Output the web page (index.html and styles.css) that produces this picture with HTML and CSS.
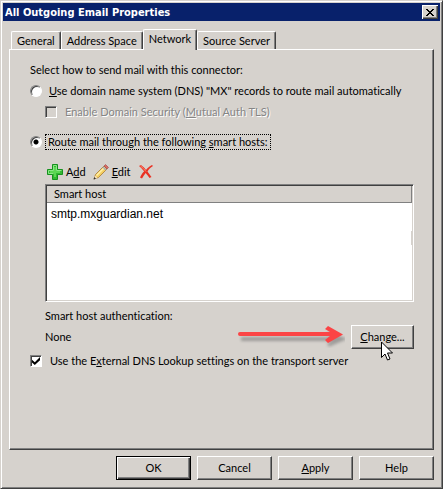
FILE: index.html
```html
<!DOCTYPE html>
<html lang="en">
<head>
<meta charset="utf-8">
<title>All Outgoing Email Properties</title>
<link rel="stylesheet" href="styles.css">
</head>
<body>
<main class="window">
  <header class="titlebar">
    <h1 class="title">All Outgoing Email Properties</h1>
    <button class="close" type="button" aria-label="Close">
      <svg width="8" height="7" viewBox="0 0 8 7" shape-rendering="crispEdges"><path d="M0 0h2v1h1v1h2V1h1V0h2v1H7v1H6v1H5v1h1v1h1v1h1v1H6V6H5V5H3v1H2v1H0V6h1V5h1V4h1V3H2V2H1V1H0z"/></svg>
    </button>
  </header>
  <div class="body">
    <div class="tabs" role="tablist">
      <button class="tab" type="button" role="tab">General</button>
      <button class="tab" type="button" role="tab">Address Space</button>
      <button class="tab active" type="button" role="tab" aria-selected="true">Network</button>
      <button class="tab" type="button" role="tab">Source Server</button>
    </div>
    <form class="pane">
      <p class="line">Select how to send mail with this connector:</p>
      <div class="line option">
        <input class="radio" type="radio" name="route" id="dns">
        <label class="caption" for="dns"><u>U</u>se domain name system (DNS) "MX" records to route mail automatically</label>
      </div>
      <div class="line option nested">
        <input class="check" type="checkbox" id="tls" disabled>
        <label class="caption disabled" for="tls">Enable Domain Security (<u>M</u>utual Auth TLS)</label>
      </div>
      <div class="line option smart">
        <input class="radio" type="radio" name="route" id="smart" checked>
        <label class="caption focused" for="smart">Route mail through the following <u>s</u>mart hosts:</label>
      </div>
      <section class="hosts">
        <div class="toolbar">
          <button class="tool" type="button">
            <svg width="16" height="16" viewBox="0 0 16 16"><path d="M5.500.5h5v5h5v5h-5v5h-5v-5h-5v-5h5z" fill="#32b832" stroke="#16911e" stroke-linejoin="round"/><path d="M6.500 9.500h-5v-3h5v-5h3v5h5" fill="none" stroke="#8be886"/><path d="M8 3v10M3 8h10" stroke="#5bd653" stroke-width="2"/></svg>
            <span>A<u>d</u>d</span>
          </button>
          <button class="tool" type="button">
            <svg width="16" height="16" viewBox="0 0 16 16"><path d="M1 15l1.500-4.500L11 2l3 3-8.500 8.500z" fill="#f4cf62" stroke="#a87832" stroke-width=".8"/><path d="M3.500 11.500L11.500 3.500" stroke="#fff0a8" stroke-width="1.500"/><path d="M11 2l1.500-1.500 3 3L14 5z" fill="#d86a63" stroke="#9c4545" stroke-width=".6"/><path d="M10 3l3 3" stroke="#9da9bd" stroke-width="1.300"/><path d="M1 15l1-3.500 2.500 2.500z" fill="#f7e4c4"/><path d="M.5 15.500l.8-2.500 1.700 1.700z" fill="#333"/></svg>
            <span><u>E</u>dit</span>
          </button>
          <button class="tool" type="button" aria-label="Remove">
            <svg width="16" height="16" viewBox="0 0 16 16"><path d="M1 2l2-1c2 1.500 3.500 3 5 5 1.500-2 3.500-4 6-5l1 1c-2.500 1.500-4.500 3.500-5.500 5.500 1 1.500 2.500 3.500 4 5.500l-2 1c-1.500-2-2.500-3.500-3.800-5-1.200 1.500-2.500 3.500-3.700 5.500l-2-1c1.200-2.500 2.500-4.500 4.200-6.200C4.500 5.500 3 3.500 1 2z" fill="#e93224"/><path d="M2.500 2c2 1.500 4 3.500 5.500 5.500" fill="none" stroke="#ff8b74"/></svg>
          </button>
        </div>
        <div class="list">
          <table class="table">
            <thead><tr><th>Smart host</th></tr></thead>
            <tbody><tr><td>smtp.mxguardian.net</td></tr></tbody>
          </table>
          <span class="grip"></span>
        </div>
        <p class="line authlabel">Smart host authentication:</p>
        <div class="auth">
          <span>None</span>
          <svg class="arrow" width="108" height="22" viewBox="0 0 108 22">
            <defs><filter id="soft" x="-10%" y="-40%" width="120%" height="200%"><feGaussianBlur stdDeviation="1.500"/></filter></defs>
            <path d="M3 10h97M90 4l14 6-14 6" fill="none" stroke="#777" stroke-width="4" opacity=".6" filter="url(#soft)" transform="translate(1 3)"/>
            <path d="M3 6Q1 6 1 8T3 10H93l-5 4 3 3L106 8.500 91 0l-3 3 5 3z" fill="#fb4445"/>
          </svg>
          <button class="button change" type="button"><u>C</u>hange...
            <svg class="pointer" width="13" height="21" viewBox="0 0 13 21"><path d="M.5 1v15.500l3.500-3.500 2.500 6 2.500-1-2.500-6h5z" fill="#fff" stroke="#000"/></svg>
          </button>
        </div>
      </section>
      <div class="line option external">
        <input class="check" type="checkbox" id="ext" checked>
        <label class="caption" for="ext">Use the E<u>x</u>ternal DNS Lookup settings on the transport server</label>
      </div>
    </form>
    <footer class="actions">
      <button class="button default" type="button">OK</button>
      <button class="button" type="button">Cancel</button>
      <button class="button" type="button"><u>A</u>pply</button>
      <button class="button" type="button">Help</button>
    </footer>
  </div>
</main>
</body>
</html>
```
FILE: styles.css
```css
* { box-sizing: border-box; }

body {
  margin: 0;
  background: #d6d2cd;
  color: #000;
  font: 11px/16px Lato, "Liberation Sans", sans-serif;
  font-variant-ligatures: none;
}

button {
  margin: 0;
  padding: 0;
  border: 0;
  background: none;
  color: inherit;
  font: inherit;
}

u { text-underline-offset: 1px; text-decoration-thickness: 1px; text-decoration-skip-ink: none; }

svg { display: block; flex: none; }

.window {
  display: flex;
  flex-direction: column;
  min-height: 100vh;
  padding: 1px;
  border: 1px solid;
  border-color: #d6d2cd #404040 #404040 #d6d2cd;
  box-shadow: inset 1px 1px #fff, inset -1px -1px #808080;
}

.titlebar {
  display: flex;
  align-items: center;
  justify-content: space-between;
  height: 18px;
  margin: 1px 1px 0;
  padding: 0 2px;
  background: #08216b;
}

.title { margin: 0; padding-top: 2px; color: #fff; font: bold 11px/16px "DejaVu Sans Condensed", sans-serif; }

.close {
  display: flex;
  align-items: center;
  justify-content: center;
  width: 16px;
  height: 14px;
  background: #d6d2cd;
  box-shadow: inset 1px 1px #fff, inset -1px -1px #404040, inset -2px -2px #808080;
}

.body {
  display: flex;
  flex: 1;
  flex-direction: column;
  padding: 8px 7px 7px;
}

.tabs { display: flex; align-items: flex-end; padding-left: 2px; }

.tab {
  height: 18px;
  padding: 0 5px;
  border: solid;
  border-width: 1px 1px 0;
  border-color: #fff #404040 #fff #fff;
  border-radius: 2px 2px 0 0;
  box-shadow: inset -1px 0 #808080;
}

.tab.active {
  position: relative;
  height: 21px;
  margin-bottom: -1px;
  padding-bottom: 3px;
  background: #d6d2cd;
}

.pane {
  flex: 1;
  padding: 12px 19px 0 20px;
  border: 1px solid;
  border-color: #fff #404040 #404040 #fff;
  box-shadow: inset -1px -1px #808080;
}

.line { height: 16px; margin: 0 0 5px; white-space: nowrap; }

.option { display: flex; align-items: center; gap: 7px; }

.nested { padding-left: 15px; }

.nested, .external { gap: 8px; }

.smart { gap: 3px; margin: 14px 0; }

.focused { padding: 0 4px 0 3px; outline: 1px dotted #000; outline-offset: -1px; }

.disabled { color: #858585; text-shadow: 1px 1px #fff; }

.radio, .check {
  flex: none;
  width: 12px;
  height: 12px;
  margin: 0;
  border: 1px solid;
  border-color: #808080 #fff #fff #808080;
  background: #fff;
  box-shadow: inset 1px 1px #404040;
  appearance: none;
}

.radio { border-radius: 50%; }

.radio:checked { background: radial-gradient(circle, #000 2px, #fff 3px); }

.check:disabled { background: #d6d2cd; }

.check:checked {
  display: grid;
  place-items: center;
}

.check:checked::before {
  content: "";
  width: 8px;
  height: 8px;
  background: #000;
  clip-path: polygon(0 35%, 35% 65%, 100% 0, 100% 40%, 35% 100%, 0 70%);
}

.hosts { padding-left: 15px; }

.toolbar { display: flex; gap: 7px; margin-bottom: 4px; padding-left: 2px; }

.tool { display: flex; gap: 3px; height: 16px; }

.list {
  position: relative;
  height: 118px;
  border: 1px solid;
  border-color: #808080 #fff #fff #808080;
  background: #fff;
  box-shadow: inset 1px 1px #404040, inset -1px -1px #d6d2cd;
}

.table { width: 100%; padding: 1px; border-spacing: 0; }

.table th {
  height: 17px;
  padding: 0 7px;
  border: solid #808080;
  border-width: 0 1px 1px 0;
  background: #d6d2cd;
  font-weight: normal;
  line-height: 16px;
  text-align: left;
}

.table td { padding: 3px 4px; font: 12px/16px "Liberation Sans", sans-serif; }

.grip { position: absolute; top: 46px; right: 0; width: 2px; height: 14px; background: #d6d2cd; }

.authlabel { margin: 6px 0 1px; }

.auth { display: flex; align-items: center; }

.arrow { margin: 0 6px 0 auto; }

.button {
  height: 24px;
  width: 75px;
  border: 1px solid;
  border-color: #fff #404040 #404040 #fff;
  box-shadow: inset -1px -1px #808080;
  text-align: center;
}

.change { position: relative; width: 63px; }

.pointer { position: absolute; top: 15px; left: 29px; }

.external { margin: 4px 0 0; }

.default { border-color: #000; box-shadow: inset 1px 1px #fff, inset -1px -1px #404040, inset -2px -2px #808080; }

.actions { display: flex; justify-content: flex-end; gap: 6px; margin-top: 6px; }
```
